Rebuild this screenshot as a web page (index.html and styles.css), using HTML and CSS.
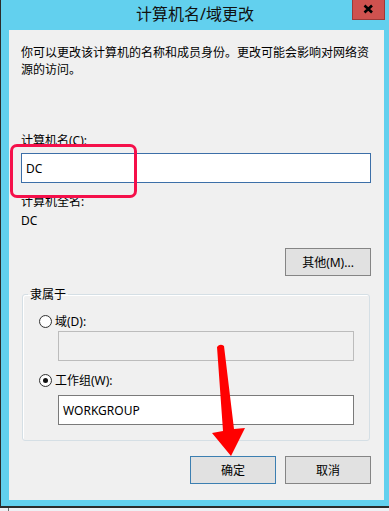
FILE: index.html
```html
<!DOCTYPE html>
<html lang="zh-CN">
<head>
<meta charset="utf-8">
<title>计算机名/域更改</title>
<link rel="stylesheet" href="styles.css">
</head>
<body>
<div class="window">
  <div class="titlebar">
    <span class="spacer"></span>
    <span class="title">计算机名/域更改</span>
    <span class="tb-right">
      <span class="close"><svg width="33" height="20" viewBox="0 0 33 20"><path d="M12.5 6.5 L20 13.5 M20 6.5 L12.5 13.5" stroke="#000" stroke-width="2.6" fill="none"/></svg></span>
    </span>
  </div>
  <div class="panel">
    <p class="desc">你可以更改该计算机的名称和成员身份。更改可能会影响对网络资源的访问。</p>
    <label class="label first" for="cname">计算机名(C):</label>
    <input id="cname" class="field focused" type="text" value="DC" readonly>
    <div class="label second">计算机全名:</div>
    <div class="value">DC</div>
    <div class="btnrow more-row">
      <button class="btn">其他(M)...</button>
    </div>
    <fieldset class="group">
      <legend>隶属于</legend>
      <div class="radio-row"><span class="radio"></span><span>域(D):</span></div>
      <input class="field disabled indent" type="text" value="" readonly>
      <div class="radio-row second-radio"><span class="radio checked"></span><span>工作组(W):</span></div>
      <input class="field wg indent" type="text" value="WORKGROUP" readonly>
    </fieldset>
    <div class="btnrow actions">
      <button class="btn default">确定</button>
      <button class="btn">取消</button>
    </div>
  </div>
</div>
<div class="below"></div>
<div class="highlight"></div>
<svg class="arrow" width="389" height="511" viewBox="0 0 389 511"><path d="M217 347 Q220 343 224 346 L234 429 L245 428 L231 456 L212 433 L223 431 Z" fill="#ff0000"/></svg>
</body>
</html>
```

FILE: styles.css
```css
* { box-sizing: border-box; }
html, body { margin: 0; padding: 0; }
body {
  width: 389px;
  height: 511px;
  overflow: hidden;
  background: #eef0f4;
  font-family: "Noto Sans", "Noto Sans CJK SC", sans-serif;
  font-size: 12px;
  line-height: 17px;
  color: #000;
  position: relative;
}
.window {
  height: 508px;
  background: #62d0ee;
  border-left: 1px solid #2b2b2b;
  border-bottom: 2px solid #2b2b2b;
  display: flex;
  flex-direction: column;
}
.titlebar {
  height: 30px;
  display: grid;
  grid-template-columns: 1fr auto 1fr;
  align-items: start;
}
.title {
  font-size: 16px;
  line-height: 20px;
  margin-top: 4px;
  color: #111;
  white-space: nowrap;
}
.tb-right { display: flex; justify-content: flex-end; padding-right: 4px; }
.close {
  width: 33px;
  height: 20px;
  background: #cf524f;
  border: 1px solid #9c3a38;
  border-top: none;
  display: block;
}
.close svg { display: block; margin: -1px 0 0 -1px; }
.panel {
  height: 470px;
  margin: 0 5px 0 8px;
  background: #f0f0f0;
  padding: 14px 13px 0 12px;
  display: flex;
  flex-direction: column;
}
.desc { margin: 0; }
.label { display: block; }
.label.first { margin-top: 54px; }
.field {
  display: block;
  height: 30px;
  width: 100%;
  margin: 4px 0 0 0;
  padding: 0 4px;
  font: inherit;
  color: #000;
  background: #fff;
  border: 1px solid #7a7a7a;
  outline: none;
}
.field.focused { border-color: #3c6fa8; }
.label.second { margin-top: 10px; }
.value { margin-top: 2px; }
.btnrow { display: flex; justify-content: flex-end; gap: 9px; }
.more-row { margin-top: 19px; }
.btn {
  width: 86px;
  height: 28px;
  padding: 0;
  font: inherit;
  color: #000;
  background: #e1e1e1;
  border: 1px solid #858585;
}
.btn.default { border-color: #3c7fb1; }
.group {
  margin: 10px 1px 0 1px;
  padding: 0 15px 15px 16px;
  border: 1px solid #d5dfe5;
  border-radius: 3px;
  box-shadow: inset 1px 1px 0 #fff;
  min-width: 0;
}
.group legend {
  padding: 0 2px;
  margin-left: -11px;
}
.radio-row {
  display: flex;
  align-items: center;
  gap: 3px;
  margin-top: 10px;
}
.radio-row.second-radio { margin-top: 11px; }
.radio {
  width: 13px;
  height: 13px;
  border-radius: 50%;
  border: 1px solid #333;
  background: radial-gradient(circle, #fff 55%, #e6e6e6 100%);
  display: flex;
  align-items: center;
  justify-content: center;
}
.radio.checked::after {
  content: "";
  width: 5px;
  height: 5px;
  border-radius: 50%;
  background: #111;
}
.field.indent { margin-left: 19px; width: calc(100% - 19px); }
.group .field { margin-top: 1px; }
.group .field.wg { margin-top: 6px; }
.field.disabled { background: #f0f0f0; border-color: #bcbcbc; }
.actions { margin-top: 15px; }
.below {
  height: 3px;
  margin-left: 8px;
  border-left: 1px solid #6d6d6d;
}
.highlight {
  position: absolute;
  left: 10px;
  top: 144px;
  width: 127px;
  height: 54px;
  border: 3px solid #f5104a;
  border-radius: 7px;
}
.arrow { position: absolute; left: 0; top: 0; pointer-events: none; }
```
